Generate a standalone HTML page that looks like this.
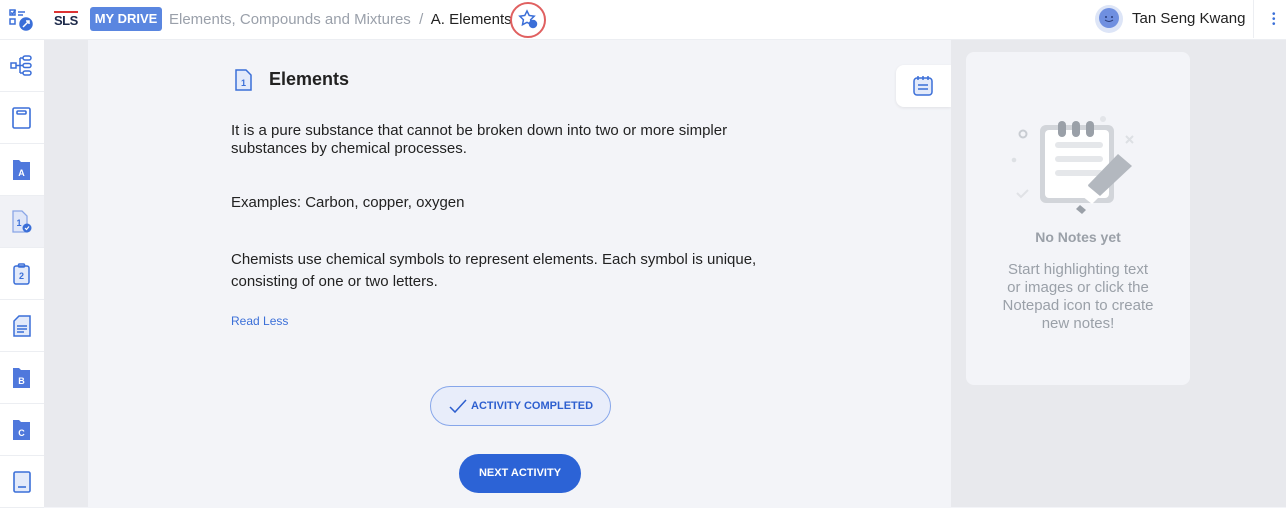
<!DOCTYPE html>
<html><head><meta charset="utf-8"><style>
*{margin:0;padding:0;box-sizing:border-box}
body{width:1286px;height:507px;overflow:hidden;font-family:"Liberation Sans","DejaVu Sans",sans-serif;background:#f3f4f8;position:relative}
.top{position:absolute;left:0;top:0;width:1286px;height:40px;background:#fff;border-bottom:1px solid #eceef2}
.side{position:absolute;left:0;top:40px;width:44px;height:467px;background:#fff}
.si{height:52px;border-bottom:1px solid #eceef2;display:flex;align-items:center;justify-content:center}
.gap{position:absolute;left:44px;top:40px;width:44px;height:467px;background:#e9eaee}
.main{position:absolute;left:88px;top:40px;width:863px;height:467px;background:#f3f4f8}
.right{position:absolute;left:951px;top:40px;width:335px;height:467px;background:#e8e9ed}
.card{position:absolute;left:15px;top:12px;width:224px;height:333px;background:#f3f4f8;border-radius:8px}
p.t{position:absolute;left:143px;font-size:15px;color:#222;line-height:18px;width:545px}
</style></head><body>
<div class="top">
<svg style="position:absolute;left:9px;top:8px" width="24" height="24" viewBox="0 0 24 24" fill="none" stroke="#3b6fd8" stroke-width="1.5"><rect x="1" y="2" width="5" height="5"/><path d="M2 4.5l1.5 1.5 3-4"/><path d="M9 4h7M9 7h5"/><rect x="1" y="11" width="5" height="5"/><circle cx="17" cy="16" r="6" fill="#3b6fd8"/><path d="M14 19l6-6M17 13h3v3" stroke="#fff"/></svg>
<div style="position:absolute;left:54px;top:11px;width:24px;border-top:2px solid #d33"></div>
<div style="position:absolute;left:54px;top:13px;font-size:13px;font-weight:bold;color:#1d2a4a;letter-spacing:-0.5px">SLS</div>
<div style="position:absolute;left:90px;top:7px;width:72px;height:24px;background:#5a86e0;border-radius:3px;color:#fff;font-size:13px;font-weight:bold;line-height:24px;text-align:center">MY DRIVE</div>
<div style="position:absolute;left:169px;top:11px;font-size:15px;color:#9aa0aa;white-space:nowrap">Elements, Compounds and Mixtures &nbsp;/&nbsp; <span style="color:#222">A. Elements</span></div>
<div style="position:absolute;left:510px;top:2px;width:36px;height:36px;border:2px solid #e06060;border-radius:50%"></div>
<svg style="position:absolute;left:518px;top:9px" width="20" height="20" viewBox="0 0 20 20" fill="none" stroke="#3b6fd8" stroke-width="1.5"><path d="M9 2l2.2 4.5 5 .7-3.6 3.5.9 5L9 13.3 4.5 15.7l.9-5L1.8 7.2l5-.7z"/><circle cx="15" cy="15" r="3.5" fill="#3b6fd8"/></svg>
<svg style="position:absolute;left:1095px;top:5px" width="28" height="28" viewBox="0 0 28 28"><circle cx="14" cy="14" r="14" fill="#dde5f7"/><circle cx="14" cy="13" r="10" fill="#6f8fe0"/><path d="M10 15q4 3 8 0" stroke="#2a3d7a" fill="none"/><circle cx="11" cy="12" r="1" fill="#2a3d7a"/><circle cx="17" cy="12" r="1" fill="#2a3d7a"/></svg>
<div style="position:absolute;left:1132px;top:10px;font-size:15px;color:#222">Tan Seng Kwang</div>
<div style="position:absolute;left:1253px;top:0;height:38px;border-left:1px solid #eceef2"></div>
<div style="position:absolute;left:1272px;top:12px;width:3px;color:#3b6fd8;font-size:10px;line-height:5px">•<br>•<br>•</div>
</div>
<div class="side">
<div class="si"><svg width="24" height="24" viewBox="0 0 24 24" fill="none" stroke="#3b6fd8" stroke-width="1.5"><rect x="1" y="9" width="5" height="5"/><path d="M6 11.5h4M10 4v15M10 4h3M10 11.5h3M10 19h3"/><rect x="13" y="2" width="8" height="4" rx="2"/><rect x="13" y="9.5" width="8" height="4" rx="2"/><rect x="13" y="17" width="8" height="4" rx="2"/></svg></div>
<div class="si"><svg width="22" height="24" viewBox="0 0 22 24" fill="none" stroke="#3b6fd8" stroke-width="1.6"><rect x="2" y="2" width="17" height="20" rx="1.5"/><rect x="6" y="5" width="9" height="3" rx="1"/></svg></div>
<div class="si"><svg width="22" height="24" viewBox="0 0 22 24"><path d="M2 2h6l2 2h9v18H2z" fill="#4f78dc"/><text x="10.5" y="18" font-size="9" font-weight="bold" fill="#fff" text-anchor="middle" font-family="Liberation Sans">A</text></svg></div>
<div class="si" style="background:#f1f2f6"><svg width="24" height="26" viewBox="0 0 24 26"><path d="M3 2h9l5 5v16H3z" fill="#dfe6f8" stroke="#8aa6e6" stroke-width="1.3"/><text x="9" y="17" font-size="9" font-weight="bold" fill="#3b6fd8" text-anchor="middle" font-family="Liberation Sans">1</text><circle cx="17" cy="19" r="4.5" fill="#3b6fd8"/><path d="M15 19l1.5 1.5 2.5-3" stroke="#fff" fill="none" stroke-width="1.2"/></svg></div>
<div class="si"><svg width="22" height="24" viewBox="0 0 22 24" fill="none" stroke="#3b6fd8" stroke-width="1.5"><rect x="3" y="4" width="15" height="18" rx="2" fill="#e3eafa"/><rect x="7.5" y="2" width="6" height="3" rx="1"/><text x="10.5" y="17" font-size="9" font-weight="bold" fill="#3b6fd8" stroke="none" text-anchor="middle" font-family="Liberation Sans">2</text></svg></div>
<div class="si"><svg width="22" height="24" viewBox="0 0 22 24" fill="none" stroke="#3b6fd8" stroke-width="1.5"><path d="M8 2h11v20H3V7z" fill="#e3eafa"/><path d="M6 12h10M6 15h10M6 18h7"/></svg></div>
<div class="si"><svg width="22" height="24" viewBox="0 0 22 24"><path d="M2 2h6l2 2h9v18H2z" fill="#4f78dc"/><text x="10.5" y="18" font-size="9" font-weight="bold" fill="#fff" text-anchor="middle" font-family="Liberation Sans">B</text></svg></div>
<div class="si"><svg width="22" height="24" viewBox="0 0 22 24"><path d="M2 2h6l2 2h9v18H2z" fill="#4f78dc"/><text x="10.5" y="18" font-size="9" font-weight="bold" fill="#fff" text-anchor="middle" font-family="Liberation Sans">C</text></svg></div>
<div class="si"><svg width="22" height="24" viewBox="0 0 22 24" fill="none" stroke="#3b6fd8" stroke-width="1.6"><rect x="3" y="2" width="16" height="20" rx="1.5" fill="#e3eafa"/><path d="M7 17h8"/></svg></div>
</div>
<div class="gap"></div>
<div class="main">
<svg style="position:absolute;left:146px;top:28px" width="20" height="24" viewBox="0 0 20 24"><path d="M2 2h10l5 5v15H2z" fill="#e3eafa" stroke="#3b6fd8" stroke-width="1.5"/><text x="9.5" y="18" font-size="9" font-weight="bold" fill="#3b6fd8" text-anchor="middle" font-family="Liberation Sans">1</text></svg>
<div style="position:absolute;left:181px;top:29px;font-size:18px;font-weight:bold;color:#222">Elements</div>
<p class="t" style="top:82px">It is a pure substance that cannot be broken down into two or more simpler substances by chemical processes.</p>
<p class="t" style="top:154px">Examples: Carbon, copper, oxygen</p>
<p class="t" style="top:209px;line-height:22px">Chemists use chemical symbols to represent elements. Each symbol is unique, consisting of one or two letters.</p>
<div style="position:absolute;left:143px;top:274px;font-size:12px;color:#3b6fd8">Read Less</div>
<div style="position:absolute;left:342px;top:346px;width:181px;height:40px;border:1px solid #86a6ea;background:#e8edfa;border-radius:20px;font-size:11px;font-weight:bold;color:#2d5fcf;line-height:38px;padding-left:40px">ACTIVITY COMPLETED</div>
<svg style="position:absolute;left:361px;top:358px" width="18" height="16" viewBox="0 0 18 16" fill="none" stroke="#2d5fcf" stroke-width="1.5"><path d="M1 9l5 5L17 2"/></svg>
<div style="position:absolute;left:371px;top:414px;width:122px;height:39px;background:#2c63d6;border-radius:20px;font-size:11px;font-weight:bold;color:#fff;line-height:39px;text-align:center">NEXT ACTIVITY</div>
<div style="position:absolute;left:808px;top:25px;width:55px;height:42px;background:#fff;border-radius:8px 0 0 8px;box-shadow:0 1px 3px rgba(0,0,0,.08)"></div>
<svg style="position:absolute;left:824px;top:35px" width="22" height="22" viewBox="0 0 22 22" fill="#e3eafa" stroke="#3b6fd8" stroke-width="1.5"><rect x="2" y="3" width="18" height="17" rx="3"/><path d="M6 1v4M11 1v4M16 1v4M6 10h10M6 14h10" fill="none"/></svg>
</div>
<div class="right"><div class="card">
<svg style="position:absolute;left:42px;top:58px" width="140" height="110" viewBox="0 0 140 110"><circle cx="15" cy="24" r="3.5" fill="none" stroke="#c8ccd2" stroke-width="2"/><circle cx="6" cy="50" r="2.3" fill="#dde0e4"/><circle cx="95" cy="9" r="3" fill="#e3e5e9"/><path d="M118 26l7 7M125 26l-7 7" stroke="#dde0e4" stroke-width="2"/><path d="M9 83l4 4 7-7" stroke="#e0e2e6" stroke-width="2" fill="none"/><rect x="32" y="15" width="74" height="78" rx="6" fill="#d2d5da"/><rect x="37" y="20" width="64" height="68" rx="4" fill="#fff"/><rect x="47" y="32" width="48" height="6" rx="3" fill="#e5e7ea"/><rect x="47" y="46" width="48" height="6" rx="3" fill="#e5e7ea"/><rect x="47" y="60" width="48" height="6" rx="3" fill="#e5e7ea"/><rect x="50" y="11" width="8" height="16" rx="4" fill="#9aa0a8"/><rect x="64" y="11" width="8" height="16" rx="4" fill="#9aa0a8"/><rect x="78" y="11" width="8" height="16" rx="4" fill="#9aa0a8"/><path d="M110 44l14 12-32 30-10 -3-2-8z" fill="#b3b8bf"/><path d="M80 76l12 10-8 8-10-8z" fill="#fff"/><path d="M72 95l6 5-4 4-6-5z" fill="#9aa0a8"/></svg>
<div style="position:absolute;left:0;width:224px;top:177px;text-align:center;font-size:14px;font-weight:bold;color:#9aa0a8">No Notes yet</div>
<div style="position:absolute;left:0;width:224px;top:209px;text-align:center;font-size:15px;color:#9aa0a8;line-height:18px">Start highlighting text<br>or images or click the<br>Notepad icon to create<br>new notes!</div>
</div></div>
</body></html>
